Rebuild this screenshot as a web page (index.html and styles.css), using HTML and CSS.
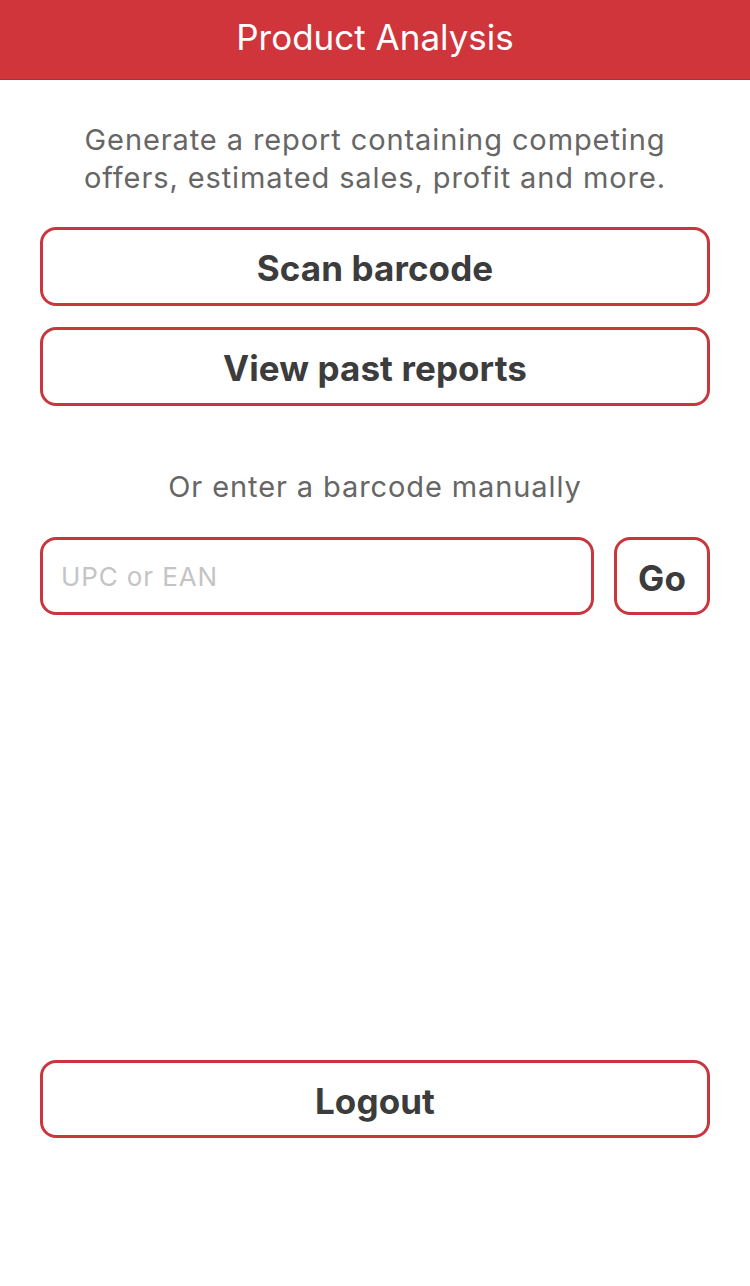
FILE: index.html
```html
<!DOCTYPE html>
<html>
<head>
<meta charset="utf-8">
<link rel="stylesheet" href="styles.css">
</head>
<body>
<div class="page">
  <header class="topbar"><h1 class="title">Product Analysis</h1></header>
  <main class="content">
    <p class="intro">Generate a report containing competing<br>offers, estimated sales, profit and more.</p>
    <div class="actions">
      <button class="btn">Scan barcode</button>
      <button class="btn">View past reports</button>
    </div>
    <p class="manual">Or enter a barcode manually</p>
    <div class="entry">
      <input class="code-input" type="text" placeholder="UPC or EAN">
      <button class="btn go">Go</button>
    </div>
    <div class="spacer"></div>
    <button class="btn logout">Logout</button>
  </main>
</div>
</body>
</html>
```

FILE: styles.css
```css
* { box-sizing: border-box; }
html, body { margin: 0; padding: 0; background: #fff; }
body { font-family: "Inter", "Liberation Sans", sans-serif; }
.page { height: 1286px; display: flex; flex-direction: column; }
.topbar {
  height: 80px;
  background: #d0353b;
  border-bottom: 1px solid #b32c32;
  display: flex;
  align-items: center;
  justify-content: center;
  flex-shrink: 0;
}
.title { margin: 0; color: #fff; font-weight: 400; font-size: 35px; padding-bottom: 6px; }
.content { flex: 1; display: flex; flex-direction: column; padding: 0 40px 148px; }
.intro { margin: 41px 0 0; text-align: center; color: #666; font-size: 29px; letter-spacing: 0.9px; line-height: 38px; }
.actions { margin-top: 30px; display: flex; flex-direction: column; gap: 21px; }
.btn {
  height: 79px;
  border: 3px solid #c9363d;
  border-radius: 16px;
  background: #fff;
  color: #3c3c3c;
  font-family: inherit;
  font-weight: 700;
  font-size: 35px;
  letter-spacing: 0.1px;
  padding: 3px 0 0;
}
.manual { margin: 62px 0 0; text-align: center; color: #666; font-size: 29px; letter-spacing: 0.9px; line-height: 38px; }
.entry { margin-top: 31px; display: flex; gap: 20px; height: 78px; }
.code-input {
  flex: 1;
  min-width: 0;
  height: 78px;
  border: 3px solid #c9363d;
  border-radius: 16px;
  padding: 0 18px;
  font-family: inherit;
  font-size: 26px;
  letter-spacing: 0.9px;
  color: #333;
  outline: none;
}
.code-input::placeholder { color: #c4c4c4; }
.go { width: 96px; height: 78px; }
.spacer { flex: 1; }
.logout { height: 78px; }
```
